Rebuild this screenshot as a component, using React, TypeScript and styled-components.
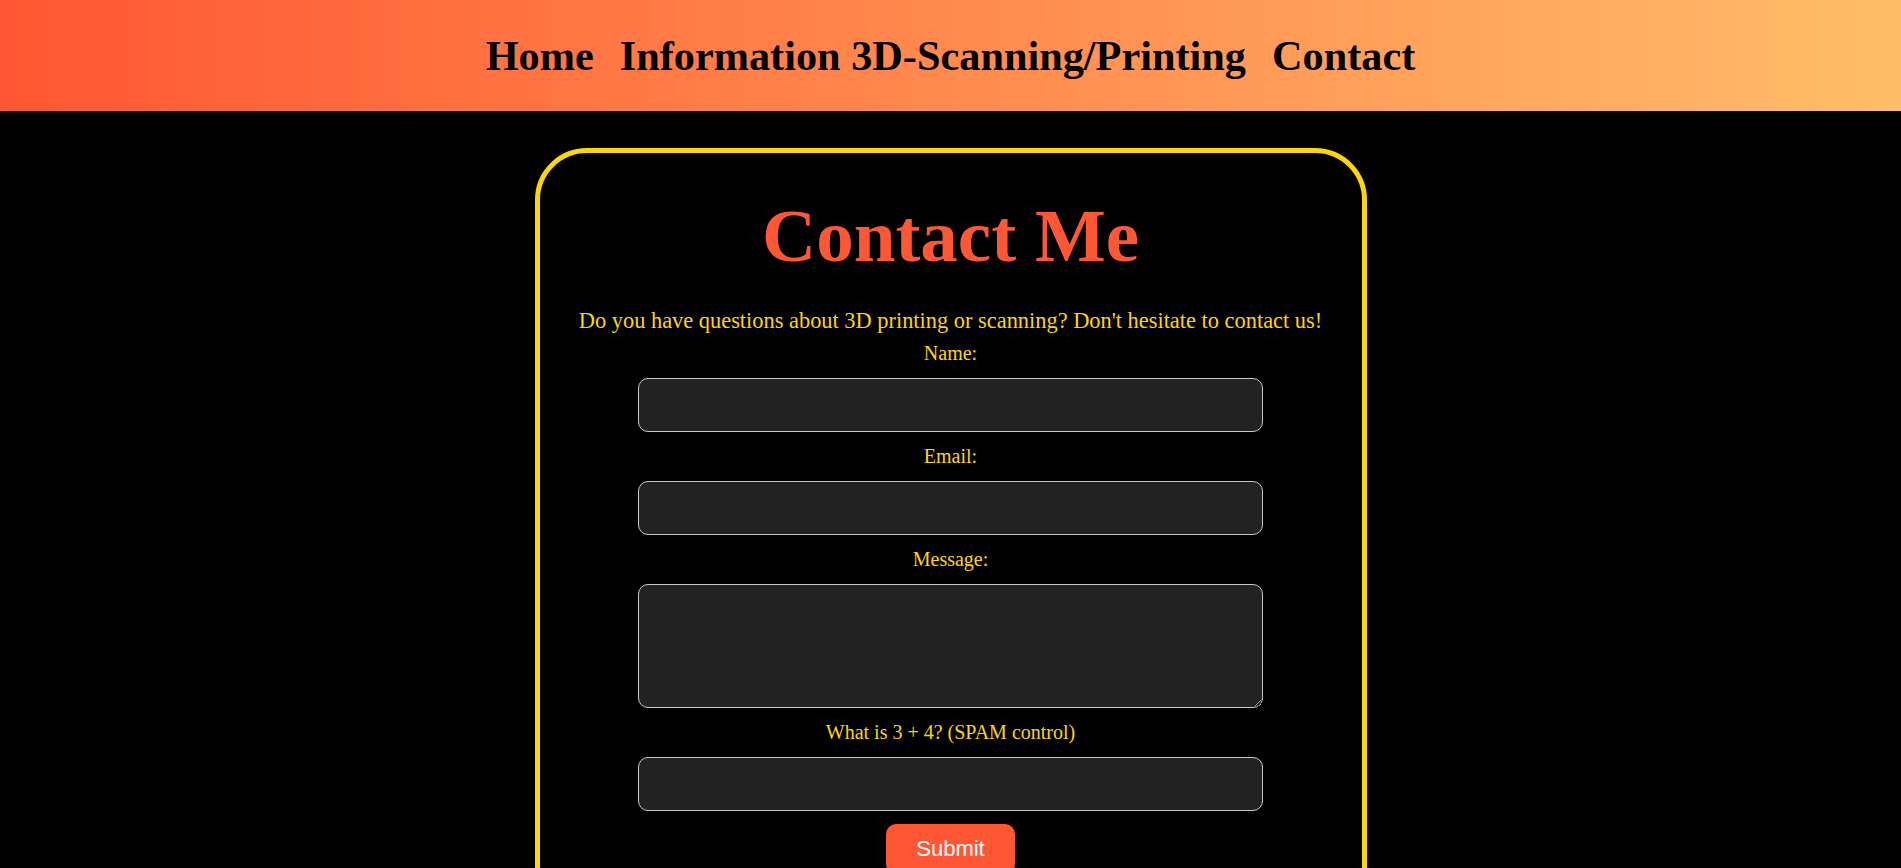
import React from "react";
import styled, { createGlobalStyle } from "styled-components";

const GlobalStyle = createGlobalStyle`
  html, body {
    margin: 0;
    padding: 0;
    background: #000;
    font-family: "Liberation Serif", "Times New Roman", serif;
  }
  * { box-sizing: border-box; }
`;

const Header = styled.header`
  height: 111px;
  background: linear-gradient(to right, #ff5733, #ffbd69);
  display: flex;
  align-items: center;
  justify-content: center;
`;

const Nav = styled.nav`
  display: flex;
  gap: 26px;
`;

const NavLink = styled.a`
  font-family: "Liberation Serif", "Times New Roman", serif;
  font-weight: bold;
  font-size: 42.3px;
  color: #000;
  text-decoration: none;
`;

const Card = styled.section`
  width: 832px;
  margin: 37px auto 0;
  border: 5px solid #ffd700;
  border-radius: 52px;
  padding: 40px 20px 40px;
  display: flex;
  flex-direction: column;
  align-items: center;
`;

const Title = styled.h1`
  margin: 0 0 29px;
  font-size: 75px;
  font-weight: bold;
  color: #ff5733;
  text-align: center;
`;

const Subtitle = styled.p`
  margin: 0 0 8px;
  font-size: 22.4px;
  color: #ffd700;
  text-align: center;
`;

const Form = styled.form`
  display: flex;
  flex-direction: column;
  align-items: center;
  gap: 13px;
  width: 100%;
`;

const Label = styled.label`
  font-size: 20px;
  color: #ffd700;
`;

const Field = styled.input`
  width: 625px;
  height: 54px;
  background: #222;
  border: 1px solid #c8c8c8;
  border-radius: 10px;
  color: #fff;
  font-size: 18px;
  padding: 0 12px;
  outline: none;
`;

const MessageArea = styled.textarea`
  width: 625px;
  height: 124px;
  background: #222;
  border: 1px solid #c8c8c8;
  border-radius: 10px;
  color: #fff;
  font-size: 18px;
  padding: 10px 12px;
  outline: none;
  display: block;
`;

const SubmitButton = styled.button`
  background: #ff5733;
  color: #fff;
  border: none;
  border-radius: 10px;
  font-family: "Liberation Sans", Arial, sans-serif;
  font-size: 22px;
  padding: 12px 30px;
  cursor: pointer;
`;

export default function App() {
  return (
    <>
      <GlobalStyle />
      <Header>
        <Nav>
          <NavLink href="#">Home</NavLink>
          <NavLink href="#">Information 3D-Scanning/Printing</NavLink>
          <NavLink href="#">Contact</NavLink>
        </Nav>
      </Header>
      <Card>
        <Title>Contact Me</Title>
        <Subtitle>
          Do you have questions about 3D printing or scanning? Don't hesitate to contact us!
        </Subtitle>
        <Form onSubmit={(e) => e.preventDefault()}>
          <Label htmlFor="name">Name:</Label>
          <Field id="name" type="text" />
          <Label htmlFor="email">Email:</Label>
          <Field id="email" type="email" />
          <Label htmlFor="message">Message:</Label>
          <MessageArea id="message" />
          <Label htmlFor="spam">What is 3 + 4? (SPAM control)</Label>
          <Field id="spam" type="text" />
          <SubmitButton type="submit">Submit</SubmitButton>
        </Form>
      </Card>
    </>
  );
}
